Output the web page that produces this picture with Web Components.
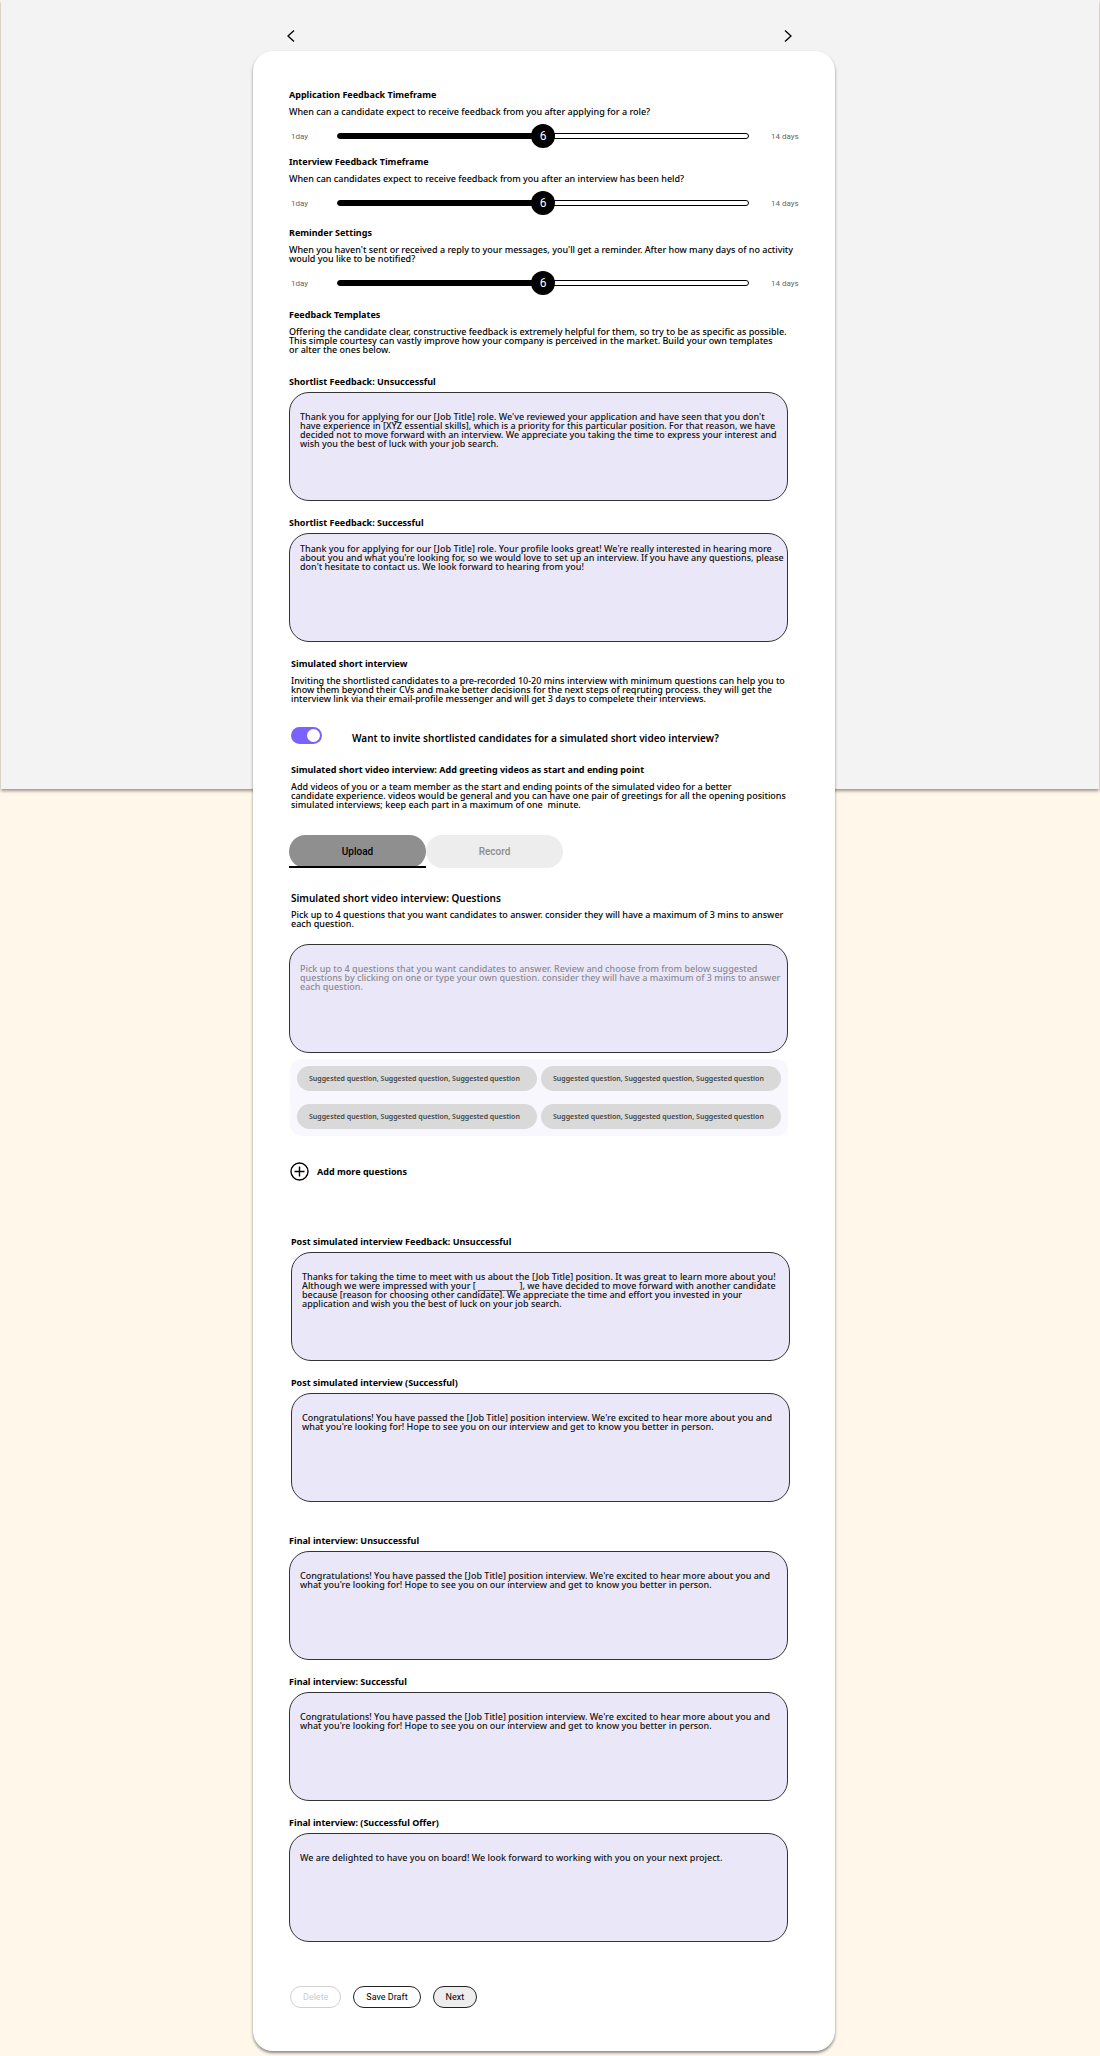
<!DOCTYPE html>
<html lang="en">
<head>
<meta charset="utf-8">
<meta name="viewport" content="width=device-width, initial-scale=1">
<title>Feedback settings</title>
<style>
    body {
        margin: 0;
        background: #fff7e9;
        color: #000;
        font: 500 9px/9px "Noto Sans", "Open Sans", sans-serif;
    }
</style>
</head>
<body>

<settings-page>
    <settings-section heading="Application Feedback Timeframe">
        When can a candidate expect to receive feedback from you after applying for a role?
        <day-slider slot="control" label="Application feedback days" value="6"></day-slider>
    </settings-section>

    <settings-section style="--space: 8px" heading="Interview Feedback Timeframe">
        When can candidates expect to receive feedback from you after an interview has been held?
        <day-slider slot="control" label="Interview feedback days" value="6"></day-slider>
    </settings-section>

    <settings-section style="--space: 12px" heading="Reminder Settings">
        When you haven't sent or received a reply to your messages, you'll get a reminder. After how many days of no activity<br>
        would you like to be notified?
        <day-slider slot="control" label="Reminder days" value="6"></day-slider>
    </settings-section>

    <settings-section style="--space: 14px" heading="Feedback Templates">
        Offering the candidate clear, constructive feedback is extremely helpful for them, so try to be as specific as possible.<br>
        This simple courtesy can vastly improve how your company is perceived in the market. Build your own templates<br>
        or alter the ones below.
    </settings-section>

    <template-field style="--space: 22px" label="Shortlist Feedback: Unsuccessful">
Thank you for applying for our [Job Title] role. We've reviewed your application and have seen that you don't
have experience in [XYZ essential skills], which is a priority for this particular position. For that reason, we have
decided not to move forward with an interview. We appreciate you taking the time to express your interest and
wish you the best of luck with your job search.
    </template-field>

    <template-field style="--inset: 10px" label="Shortlist Feedback: Successful">
Thank you for applying for our [Job Title] role. Your profile looks great! We're really interested in hearing more
about you and what you're looking for, so we would love to set up an interview. If you have any questions, please
don't hesitate to contact us. We look forward to hearing from you!
    </template-field>

    <settings-section style="--space: 16px; --indent: 2px" heading="Simulated short interview">
        Inviting the shortlisted candidates to a pre-recorded 10-20 mins interview with minimum questions can help you to<br>
        know them beyond their CVs and make better decisions for the next steps of reqruting process. they will get the<br>
        interview link via their email-profile messenger and will get 3 days to compelete their interviews.
    </settings-section>

    <toggle-switch checked>Want to invite shortlisted candidates for a simulated short video interview?</toggle-switch>

    <settings-section style="--space: 20px; --indent: 2px" heading="Simulated short video interview: Add greeting videos as start and ending point">
        Add videos of you or a team member as the start and ending points of the simulated video for a better<br>
        candidate experience. videos would be general and you can have one pair of greetings for all the opening positions<br>
        simulated interviews; keep each part in a maximum of one&nbsp; minute.
    </settings-section>

    <video-tabs></video-tabs>

    <settings-section large style="--space: 24px; --indent: 2px" heading="Simulated short video interview: Questions">
        Pick up to 4 questions that you want candidates to answer. consider they will have a maximum of 3 mins to answer<br>
        each question.
    </settings-section>

    <template-field placeholder label="">
Pick up to 4 questions that you want candidates to answer. Review and choose from from below suggested
questions by clicking on one or type your own question. consider they will have a maximum of 3 mins to answer
each question.
    </template-field>

    <suggested-questions></suggested-questions>

    <add-button>Add more questions</add-button>

    <template-field style="--space: 55px; --indent: 2px" label="Post simulated interview Feedback: Unsuccessful">
Thanks for taking the time to meet with us about the [Job Title] position. It was great to learn more about you!
Although we were impressed with your [ __________ ], we have decided to move forward with another candidate
because [reason for choosing other candidate]. We appreciate the time and effort you invested in your
application and wish you the best of luck on your job search.
    </template-field>

    <template-field style="--indent: 2px" label="Post simulated interview (Successful)">
Congratulations! You have passed the [Job Title] position interview. We're excited to hear more about you and
what you're looking for! Hope to see you on our interview and get to know you better in person.
    </template-field>

    <template-field style="--space: 33px" label="Final interview: Unsuccessful">
Congratulations! You have passed the [Job Title] position interview. We're excited to hear more about you and
what you're looking for! Hope to see you on our interview and get to know you better in person.
    </template-field>

    <template-field label="Final interview: Successful">
Congratulations! You have passed the [Job Title] position interview. We're excited to hear more about you and
what you're looking for! Hope to see you on our interview and get to know you better in person.
    </template-field>

    <template-field label="Final interview: (Successful Offer)">
We are delighted to have you on board! We look forward to working with you on your next project.
    </template-field>

    <form-actions></form-actions>
</settings-page>

<template id="settings-page">
    <style>
        :host {
            display: grid;
            grid-template-columns: minmax(0, 1fr);
        }
        .backdrop, .column {
            grid-area: 1 / 1;
        }
        .backdrop {
            height: 789px;
            margin: 0 1px;
            background: #f3f3f3;
            box-shadow: 0 2px 3px rgba(0, 0, 0, .4);
        }
        .column {
            z-index: 1;
            width: 100%;
            max-width: 582px;
            justify-self: center;
            padding: 0 12px 5px 0;
        }
        nav {
            display: flex;
            justify-content: space-between;
            align-items: flex-end;
            height: 51px;
            padding: 0 41px 8px 32px;
            box-sizing: border-box;
        }
        nav button {
            display: flex;
            padding: 0;
            border: 0;
            background: none;
            cursor: pointer;
        }
        main {
            padding: 38px 34px 43px 36px;
            border-radius: 20px;
            background: #fff;
            box-shadow: 0 2px 3px rgba(0, 0, 0, .45);
        }
    </style>

    <div class="backdrop"></div>
    <div class="column">
        <nav aria-label="Steps">
            <button type="button" aria-label="Previous">
                <svg width="12" height="14" viewBox="0 0 12 14" fill="none" stroke="#000" stroke-width="1.3"><path d="M9 1.5 3 7l6 5.500"/></svg>
            </button>
            <button type="button" aria-label="Following">
                <svg width="12" height="14" viewBox="0 0 12 14" fill="none" stroke="#000" stroke-width="1.3"><path d="m3 1.500 6 5.500-6 5.500"/></svg>
            </button>
        </nav>
        <main><slot></slot></main>
    </div>
</template>

<template id="settings-section">
    <style>
        :host {
            display: block;
            margin-top: var(--space, 0);
            padding-left: var(--indent, 0);
        }
        h2 {
            margin: 0 0 6px;
            font-size: 9px;
            line-height: 12px;
            font-weight: 700;
        }
        :host([large]) h2 {
            font-size: 10px;
            font-weight: 600;
        }
        p {
            margin: 0;
        }
    </style>

    <h2></h2>
    <p><slot></slot></p>
    <slot name="control"></slot>
</template>

<template id="day-slider">
    <style>
        :host {
            display: grid;
            grid-template-columns: 46px minmax(0, 1fr) 30px;
            align-items: center;
            margin-top: 8px;
            padding-left: 2px;
            color: #666;
            font-family: Roboto, sans-serif;
            font-size: 8px;
            font-weight: 400;
        }
        .rail {
            position: relative;
            display: flex;
            margin-right: 22px;
        }
        input {
            width: 100%;
            height: 24px;
            margin: 0;
            appearance: none;
            -webkit-appearance: none;
            background: none;
            cursor: pointer;
        }
        input::-webkit-slider-runnable-track {
            box-sizing: border-box;
            height: 6px;
            border: 1px solid #000;
            border-radius: 3px;
            background: linear-gradient(to right, #000 var(--fill), #fff var(--fill));
        }
        input::-webkit-slider-thumb {
            -webkit-appearance: none;
            width: 24px;
            height: 24px;
            margin-top: -10px;
            border-radius: 50%;
            background: #000;
        }
        /* The day count rides on the thumb */
        output {
            position: absolute;
            top: 0;
            left: calc(var(--fill) - 12px);
            width: 24px;
            color: #fff;
            font-size: 12px;
            line-height: 24px;
            text-align: center;
            pointer-events: none;
        }
    </style>

    <span>1day</span>
    <span class="rail">
        <input type="range" min="1" max="11">
        <output></output>
    </span>
    <span>14 days</span>
</template>

<template id="template-field">
    <style>
        :host {
            display: block;
            margin: var(--space, 16px) calc(13px - var(--indent, 0px)) 0 var(--indent, 0px);
        }
        label {
            display: block;
            margin-bottom: 4px;
            font-weight: 700;
            line-height: 12px;
        }
        label:empty {
            display: none;
        }
        textarea {
            display: block;
            box-sizing: border-box;
            width: 100%;
            height: 109px;
            padding: var(--inset, 19px) 0 10px 10px;
            border: 1px solid #333;
            border-radius: 20px;
            background: #eae8f8;
            color: #111;
            font: inherit;
            resize: none;
            overflow: hidden;
        }
        textarea::placeholder {
            color: #8b8a95;
            opacity: 1;
        }
    </style>

    <label for="text"></label>
    <textarea id="text"></textarea>
</template>

<template id="toggle-switch">
    <style>
        :host {
            display: flex;
            align-items: flex-end;
            gap: 30px;
            margin-top: 24px;
            padding-left: 2px;
        }
        input {
            flex: none;
            appearance: none;
            -webkit-appearance: none;
            width: 31px;
            height: 17px;
            margin: 0;
            padding: 2px;
            box-sizing: border-box;
            border-radius: 9px;
            background: #bbb;
            cursor: pointer;
        }
        input::before {
            content: "";
            display: block;
            width: 13px;
            height: 13px;
            border-radius: 50%;
            background: #fff;
        }
        input:checked {
            background: #7b61ff;
        }
        input:checked::before {
            margin-left: auto;
        }
        label {
            font-size: 10px;
            line-height: 12px;
            font-weight: 600;
        }
    </style>

    <input type="checkbox" id="toggle">
    <label for="toggle"><slot></slot></label>
</template>

<template id="video-tabs">
    <style>
        :host {
            display: flex;
            margin-top: 26px;
        }
        button {
            position: relative;
            width: 137px;
            height: 33px;
            padding: 0;
            border: 0;
            border-radius: 17px;
            background: #ededed;
            color: #8c8c8c;
            font: 500 10px/12px Roboto, sans-serif;
            cursor: pointer;
        }
        button[aria-selected="true"] {
            background: #8f8f8f;
            color: #000;
        }
        button[aria-selected="true"]::after {
            content: "";
            position: absolute;
            inset: auto 0 0;
            height: 2px;
            background: #000;
        }
    </style>

    <button type="button" role="tab" aria-selected="true">Upload</button>
    <button type="button" role="tab" aria-selected="false">Record</button>
</template>

<template id="suggested-questions">
    <style>
        :host {
            display: grid;
            grid-template-columns: 1fr 1fr;
            gap: 13px 4px;
            margin: 6px 13px 0 1px;
            padding: 7px;
            border-radius: 12px;
            background: #f8f7fe;
        }
        button {
            height: 25px;
            padding: 0 12px;
            border: 0;
            border-radius: 13px;
            background: #d9d9d9;
            color: #444;
            font: inherit;
            font-size: 7px;
            font-weight: 600;
            text-align: left;
            cursor: pointer;
        }
    </style>

    <button type="button">Suggested question, Suggested question, Suggested question</button>
    <button type="button">Suggested question, Suggested question, Suggested question</button>
    <button type="button">Suggested question, Suggested question, Suggested question</button>
    <button type="button">Suggested question, Suggested question, Suggested question</button>
</template>

<template id="add-button">
    <style>
        :host {
            display: flex;
            margin-top: 26px;
            padding-left: 1px;
        }
        button {
            display: flex;
            align-items: center;
            gap: 8px;
            padding: 0;
            border: 0;
            background: none;
            color: inherit;
            font: inherit;
            font-weight: 700;
            cursor: pointer;
        }
    </style>

    <button type="button">
        <svg width="19" height="19" viewBox="0 0 19 19" fill="none" stroke="#000" stroke-width="1.4"><circle cx="9.500" cy="9.500" r="8.500"/><path d="M9.500 4.500v10M4.500 9.500h10"/></svg>
        <slot></slot>
    </button>
</template>

<template id="form-actions">
    <style>
        :host {
            display: flex;
            gap: 12px;
            margin-top: 44px;
            padding-left: 1px;
        }
        button {
            height: 22px;
            padding: 0 12px;
            border: 1px solid #222;
            border-radius: 11px;
            background: #fff;
            color: #000;
            font: 400 9px/12px Roboto, sans-serif;
            cursor: pointer;
        }
        button:disabled {
            border-color: #d0d0d0;
            color: #ccc;
            cursor: default;
        }
        .next {
            background: #ededed;
        }
    </style>

    <button type="button" disabled>Delete</button>
    <button type="button">Save Draft</button>
    <button type="submit" class="next">Next</button>
</template>

<script>
    class BaseElement extends HTMLElement {
        constructor() {
            super();
            this.attachShadow({mode: 'open'});
            const template = document.getElementById(this.localName);
            this.shadowRoot.appendChild(template.content.cloneNode(true));
        }

        _find(selector) {
            return this.shadowRoot.querySelector(selector);
        }
    }

    class SettingsPage extends BaseElement {}

    class SettingsSection extends BaseElement {
        connectedCallback() {
            this._find('h2').textContent = this.getAttribute('heading');
        }
    }

    class DaySlider extends BaseElement {
        connectedCallback() {
            this._input = this._find('input');
            this._input.value = this.getAttribute('value');
            this._input.setAttribute('aria-label', this.getAttribute('label'));
            this._input.addEventListener('input', () => this._update());
            this._update();
        }

        _update() {
            const {min, max, value} = this._input;
            const fill = (value - min) / (max - min) * 100;
            this.style.setProperty('--fill', `${fill}%`);
            this._find('output').textContent = value;
        }
    }

    class TemplateField extends BaseElement {
        connectedCallback() {
            const label = this.getAttribute('label');
            const textarea = this._find('textarea');
            const text = this.textContent.trim();
            this._find('label').textContent = label;
            if (this.hasAttribute('placeholder')) {
                textarea.placeholder = text;
                textarea.setAttribute('aria-label', 'Questions');
            }
            else {
                textarea.value = text;
            }
        }
    }

    class ToggleSwitch extends BaseElement {
        connectedCallback() {
            this._find('input').checked = this.hasAttribute('checked');
        }
    }

    class VideoTabs extends BaseElement {
        connectedCallback() {
            this.setAttribute('role', 'tablist');
            this.shadowRoot.addEventListener('click', event => this._onClick(event));
        }

        _onClick(event) {
            if (event.target.getAttribute('role') !== 'tab') {
                return;
            }
            this.shadowRoot.querySelectorAll('button').forEach(tab => {
                tab.setAttribute('aria-selected', tab === event.target);
            });
        }
    }

    class SuggestedQuestions extends BaseElement {}
    class AddButton extends BaseElement {}
    class FormActions extends BaseElement {}

    customElements.define('settings-page', SettingsPage);
    customElements.define('settings-section', SettingsSection);
    customElements.define('day-slider', DaySlider);
    customElements.define('template-field', TemplateField);
    customElements.define('toggle-switch', ToggleSwitch);
    customElements.define('video-tabs', VideoTabs);
    customElements.define('suggested-questions', SuggestedQuestions);
    customElements.define('add-button', AddButton);
    customElements.define('form-actions', FormActions);
</script>
</body>
</html>
